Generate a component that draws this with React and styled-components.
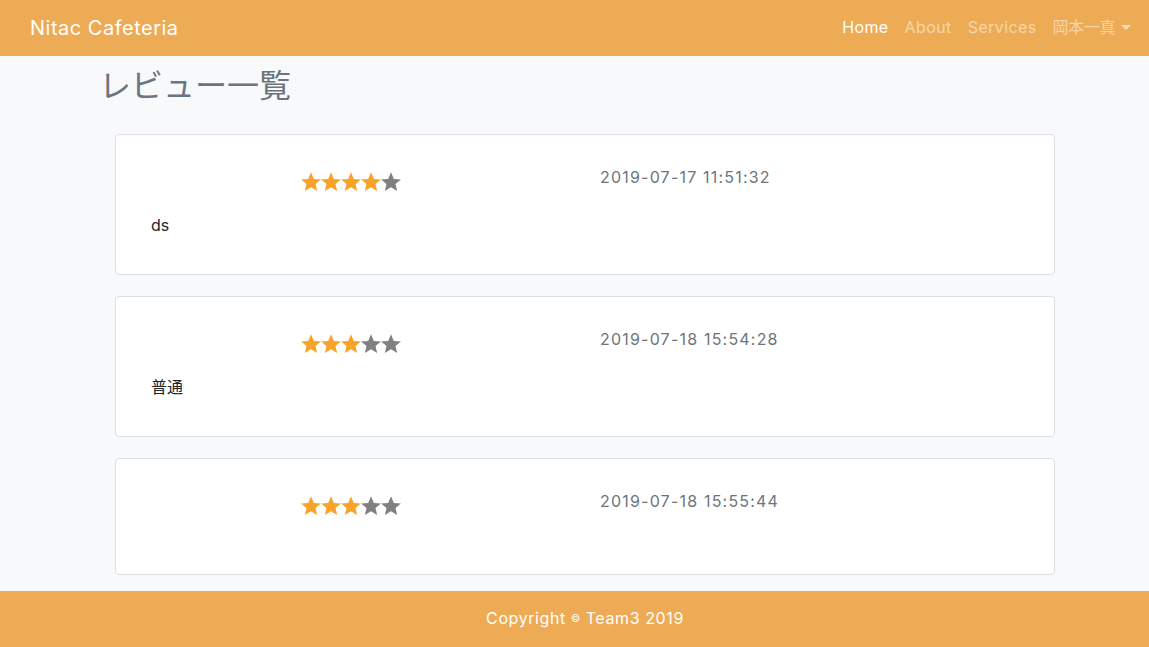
import styled, { createGlobalStyle } from "styled-components";

const reviews = [
  { id: 1, rate: 4, date: "2019-07-17 11:51:32", comment: "ds" },
  { id: 2, rate: 3, date: "2019-07-18 15:54:28", comment: "普通" },
  { id: 3, rate: 3, date: "2019-07-18 15:55:44", comment: "" },
];

const navLinks = ["Home", "About", "Services"];

export default function App() {
  return (
    <Page>
      <GlobalStyle />
      <Navbar>
        <Brand>Nitac Cafeteria</Brand>
        <NavList>
          {navLinks.map((link, i) => (
            <NavItem key={link} active={i === 0}>
              {link}
            </NavItem>
          ))}
          <NavItem cjk>
            岡本一真
            <Caret />
          </NavItem>
        </NavList>
      </Navbar>

      <Main>
        <Title>レビュー一覧</Title>
        <CardList>
          {reviews.map((review) => (
            <Card key={review.id}>
              <CardHead>
                <Stars>
                  {[1, 2, 3, 4, 5].map((n) => (
                    <Star key={n} filled={n <= review.rate} />
                  ))}
                </Stars>
                <DateText>{review.date}</DateText>
              </CardHead>
              <Comment>{review.comment}</Comment>
            </Card>
          ))}
        </CardList>
      </Main>

      <Footer>
        Copyright <Copy>©</Copy> Team3 2019
      </Footer>
    </Page>
  );
}

function Star({ filled }) {
  return (
    <StarSvg viewBox="1.2 1.2 21.6 21.6" filled={filled}>
      <path d="M12 1.6l3.05 7.05 7.65.62-5.82 5.02 1.78 7.47L12 17.8l-6.66 3.96 1.78-7.47-5.82-5.02 7.65-.62z" />
    </StarSvg>
  );
}

const GlobalStyle = createGlobalStyle`
  body {
    margin: 0;
    font-family: Inter, "Noto Sans CJK JP", sans-serif;
    color: #212529;
    background: #f8f9fa;
  }
`;

const Page = styled.div`
  display: flex;
  flex-direction: column;
  min-height: 647px;
`;

const Navbar = styled.nav`
  display: flex;
  align-items: center;
  justify-content: space-between;
  height: 56px;
  padding: 0 18px 0 30px;
  background: #eeab55;
  box-sizing: border-box;
`;

const Brand = styled.div`
  color: #fff;
  font-size: 20px;
  line-height: 30px;
  letter-spacing: 0.5px;
`;

const NavList = styled.div`
  display: flex;
  align-items: center;
  gap: 16px;
  margin-bottom: 2px;
`;

const NavItem = styled.div`
  display: flex;
  align-items: center;
  font-size: 16px;
  line-height: 24px;
  letter-spacing: ${(p) => (p.cjk ? "-0.4px" : "0.4px")};
  color: ${(p) => (p.active ? "#fff" : "rgba(255, 255, 255, 0.5)")};
`;

const Caret = styled.span`
  margin-left: 6px;
  border-top: 5px solid rgba(255, 255, 255, 0.6);
  border-left: 5px solid transparent;
  border-right: 5px solid transparent;
`;

const Main = styled.main`
  flex: 1;
  padding: 8px 94px 16px 99px;
`;

const Title = styled.h1`
  margin: 0 0 26px;
  font-size: 32px;
  line-height: 44px;
  font-weight: 400;
  color: #6c757d;
`;

const CardList = styled.div`
  display: flex;
  flex-direction: column;
  gap: 21px;
  padding-left: 16px;
`;

const Card = styled.div`
  background: #fff;
  border: 1px solid #dcdfe3;
  border-radius: 4px;
  padding: 30px 35px 37px;
`;

const CardHead = styled.div`
  display: grid;
  grid-template-columns: 299px 1fr;
  align-items: start;
  padding-left: 150px;
  height: 29px;
`;

const Stars = styled.div`
  display: flex;
  margin-top: 7px;
`;

const StarSvg = styled.svg`
  width: 20px;
  height: 20px;
  fill: ${(p) => (p.filled ? "#f9a22a" : "#808080")};
`;

const DateText = styled.div`
  font-size: 16px;
  line-height: 24px;
  letter-spacing: 1.2px;
  color: #6c757d;
`;

const Comment = styled.p`
  margin: 19px 0 0;
  font-size: 16px;
  line-height: 24px;
  color: #212529;
`;

const Footer = styled.footer`
  display: flex;
  align-items: center;
  justify-content: center;
  height: 57px;
  padding: 0 0 3px 21px;
  box-sizing: border-box;
  background: #eeab55;
  color: #fff;
  font-size: 16px;
  letter-spacing: 0.6px;
`;

const Copy = styled.span`
  font-size: 10px;
  margin: 0 5px;
`;
